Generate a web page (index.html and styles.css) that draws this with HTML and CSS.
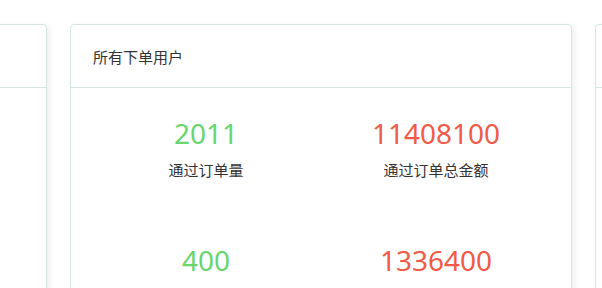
FILE: index.html
```html
<!DOCTYPE html>
<html lang="zh-CN">
<head>
  <meta charset="UTF-8" />
  <title>下单统计</title>
  <link rel="stylesheet" href="styles.css">
</head>
<body>
  <div class="cards">
    <div class="card">
      <div class="card-header"></div>
      <div class="card-body"></div>
    </div>

    <div class="card">
      <div class="card-header">所有下单用户</div>
      <div class="card-body">
        <div class="stat">
          <div class="num green">2011</div>
          <div class="label">通过订单量</div>
        </div>
        <div class="stat">
          <div class="num red">11408100</div>
          <div class="label">通过订单总金额</div>
        </div>
        <div class="stat">
          <div class="num green">400</div>
          <div class="label">新加入用户订单量</div>
        </div>
        <div class="stat">
          <div class="num red">1336400</div>
          <div class="label">新加入用户订单金额</div>
        </div>
      </div>
    </div>

    <div class="card">
      <div class="card-header"></div>
      <div class="card-body"></div>
    </div>
  </div>
</body>
</html>
```

FILE: styles.css
```css
/* === Reset === */
* { margin:0; padding:0; box-sizing:border-box; }
html, body {
  background: #fff;
  font-family: "Noto Sans", "Noto Sans CJK SC", sans-serif;
  color: #333;
  overflow: hidden;
}

/* === Fila de tarjetas === */
.cards {
  display: flex;
  gap: 23px;
  padding-top: 24px;
  margin-left: -455px;
}

.card {
  flex: 0 0 502px;
  height: 320px;
  background: #fff;
  border: 1px solid #d5e6e2;
  border-radius: 4px;
  box-shadow: 2px 2px 6px rgba(0,0,0,0.08);
}

.card-header {
  height: 63px;
  padding-left: 22px;
  border-bottom: 1px solid #d5e6e2;
  display: flex; align-items: center;
  font-size: 15px;
  color: #333;
}

/* === Estadísticas === */
.card-body {
  padding: 28px 20px 0;
  display: grid;
  grid-template-columns: 1fr 1fr;
  row-gap: 63px;
}
.stat {
  text-align: center;
}
.num {
  font-size: 28px;
  line-height: 34px;
}
.num.green { color: #68d56d; }
.num.red { color: #f15a47; }
.label {
  margin-top: 10px;
  font-size: 15px;
  line-height: 20px;
  color: #333;
}
```
